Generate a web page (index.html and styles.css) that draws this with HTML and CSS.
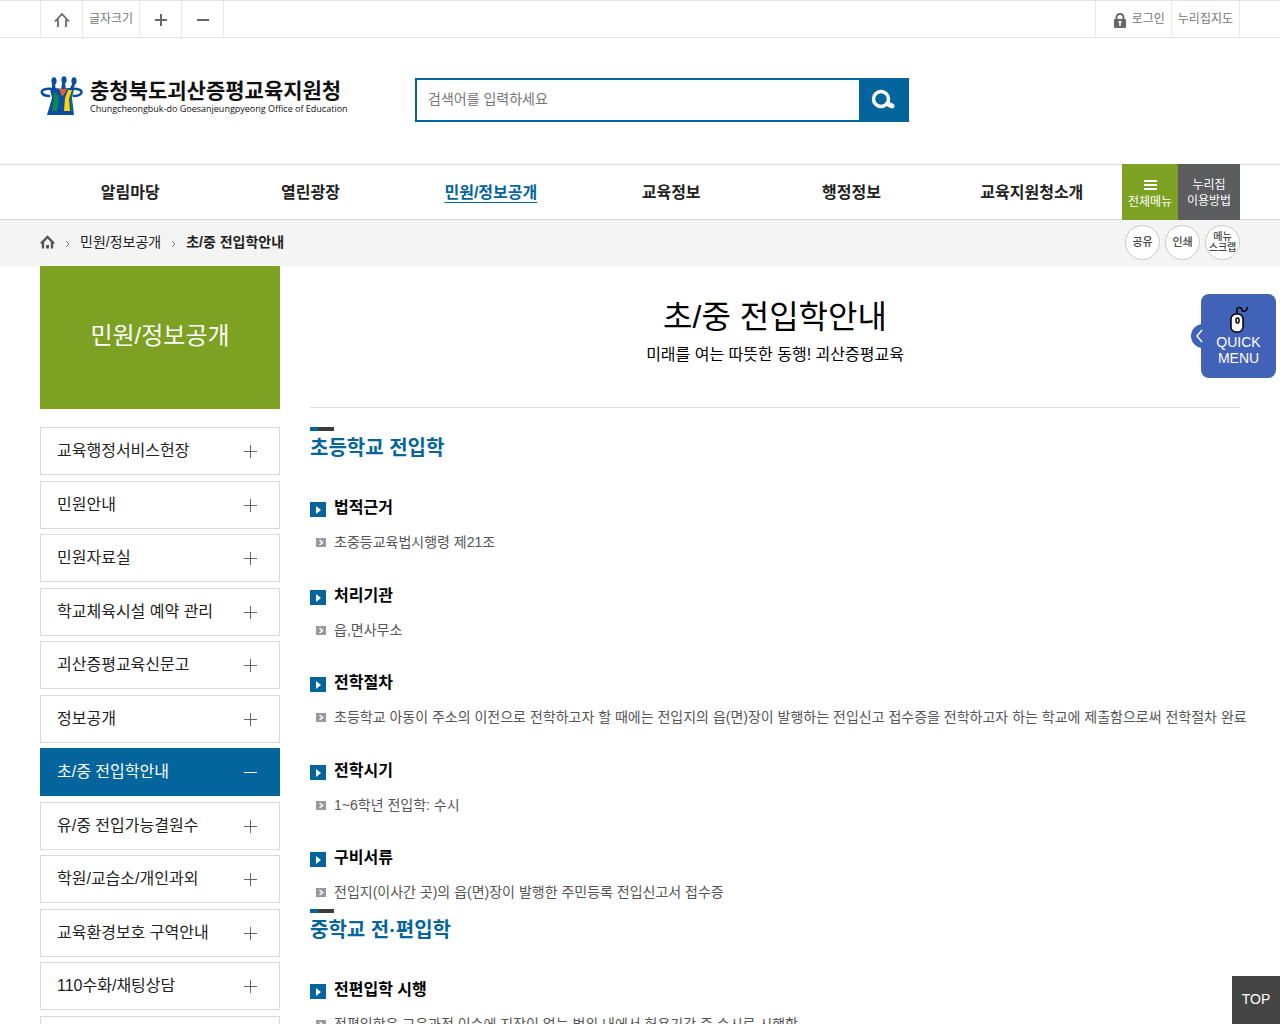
FILE: index.html
```html
<!DOCTYPE html>
<html lang="ko">
<head>
<meta charset="utf-8">
<meta name="viewport" content="width=device-width, initial-scale=1">
<title>초/중 전입학안내 - 충청북도괴산증평교육지원청</title>
<link rel="stylesheet" href="styles.css">
</head>
<body>
<div class="topbar">
  <div class="wrap topbar-row">
    <div class="cells">
      <a class="cell icon-cell" href="#" aria-label="홈"><svg width="16" height="16" viewBox="0 0 16 16"><path d="M1 9.500 8 2l7 7.500M4 7.500V15M12 7.500V15" fill="none" stroke="#666" stroke-width="1.800"/></svg></a>
      <span class="cell">글자크기</span>
      <button class="cell icon-cell" type="button" aria-label="글자 크게"><svg width="14" height="14" viewBox="0 0 14 14"><path d="M1 7h12M7 1v12" stroke="#666" stroke-width="2"/></svg></button>
      <button class="cell icon-cell" type="button" aria-label="글자 작게"><svg width="14" height="14" viewBox="0 0 14 14"><path d="M1 7h12" stroke="#666" stroke-width="2"/></svg></button>
    </div>
    <div class="cells">
      <a class="cell login" href="#"><svg width="12" height="15" viewBox="0 0 12 15"><path d="M2.500 7V4.500a3.500 3.500 0 0 1 7 0V7" fill="none" stroke="#666" stroke-width="2"/><rect y="6" width="12" height="9" rx="1" fill="#666"/><path d="M6 8v5M4.500 9h3" stroke="#fff" stroke-width="1.500"/></svg>로그인</a>
      <a class="cell" href="#">누리집지도</a>
    </div>
  </div>
</div>

<header class="wrap header">
  <a class="logo" href="#">
    <svg width="44" height="40" viewBox="0 0 44 40">
      <path d="M10 20C1 20-1 14 6 13c6-1 10 1 16 1s10-2 15-1c7 1 6 7-4 7" fill="none" stroke="#0c4da2" stroke-width="2.500"/>
      <path d="M10 13q12 2 24 0l-2 9 2 17H7l5-17z" fill="#0c4da2"/>
      <g fill="#0c4da2"><ellipse cx="14" cy="5" rx="2.600" ry="3.800"/><ellipse cx="24" cy="4" rx="2.600" ry="3.800"/><ellipse cx="34" cy="5" rx="2.600" ry="3.800"/><path d="M12 8h3l1 7h-4zM22 7h3l1 7h-5zM32 8h3l-2 7h-4z"/></g>
      <path d="M19 13h8l-3 6-2 1z" fill="#e2622a"/>
      <path d="M13 16l5 3 1 6-2 10h-5l2-12z" fill="#0b8a4b"/>
      <path d="M28 14h4l-3 9 1 12h-6l1-13z" fill="#fdd20a"/>
      <path d="M33 15l-2 8 1 12" fill="none" stroke="#0b8a4b"/>
    </svg>
    <span class="logo-text"><strong>충청북도괴산증평교육지원청</strong><small>Chungcheongbuk-do Goesanjeungpyeong Office of Education</small></span>
  </a>
  <form class="search" role="search">
    <input type="search" aria-label="검색어" placeholder="검색어를 입력하세요">
    <button type="submit" aria-label="검색"><svg width="26" height="22" viewBox="0 0 26 22"><circle cx="11" cy="10" r="7.500" fill="none" stroke="#fff" stroke-width="3.500"/><path d="m18 15 4 2" stroke="#fff" stroke-width="5" stroke-linecap="round"/></svg></button>
  </form>
</header>

<nav class="gnb" aria-label="주메뉴">
  <div class="wrap gnb-row">
    <ul class="gnb-list">
      <li><a href="#">알림마당</a></li>
      <li><a href="#">열린광장</a></li>
      <li><a class="current" href="#">민원/정보공개</a></li>
      <li><a href="#">교육정보</a></li>
      <li><a href="#">행정정보</a></li>
      <li><a href="#">교육지원청소개</a></li>
    </ul>
    <button class="all-menu" type="button"><svg width="13" height="10" viewBox="0 0 13 10"><path d="M0 1h13M0 5h13M0 9h13" stroke="#fff" stroke-width="2"/></svg>전체메뉴</button>
    <a class="guide" href="#">누리집<br>이용방법</a>
  </div>
</nav>

<div class="location">
  <div class="wrap location-row">
    <div class="crumbs">
      <a href="#" aria-label="홈"><svg width="15" height="14" viewBox="0 0 15 14"><path d="M1 8.500 7.500 2 14 8.500M3 7v6.500M12 7v6.500" fill="none" stroke="#555" stroke-width="2.400"/><path d="M6 10h3v3.500H6z" fill="#555"/></svg></a>
      <svg class="sep" width="5" height="8" viewBox="0 0 5 8"><path d="m1 1 3 3-3 3" fill="none" stroke="#777"/></svg>
      <a href="#">민원/정보공개</a>
      <svg class="sep" width="5" height="8" viewBox="0 0 5 8"><path d="m1 1 3 3-3 3" fill="none" stroke="#777"/></svg>
      <strong>초/중 전입학안내</strong>
    </div>
    <div class="tools">
      <button type="button">공유</button>
      <button type="button">인쇄</button>
      <button class="two-line" type="button">메뉴<br>스크랩</button>
    </div>
  </div>
</div>

<div class="wrap body">
  <aside class="side">
    <h2>민원/정보공개</h2>
    <ul class="side-list">
      <li><a href="#">교육행정서비스헌장</a></li>
      <li><a href="#">민원안내</a></li>
      <li><a href="#">민원자료실</a></li>
      <li><a href="#">학교체육시설 예약 관리</a></li>
      <li><a href="#">괴산증평교육신문고</a></li>
      <li><a href="#">정보공개</a></li>
      <li><a class="current" href="#">초/중 전입학안내</a></li>
      <li><a href="#">유/중 전입가능결원수</a></li>
      <li><a href="#">학원/교습소/개인과외</a></li>
      <li><a href="#">교육환경보호 구역안내</a></li>
      <li><a href="#">110수화/채팅상담</a></li>
      <li><a href="#"></a></li>
    </ul>
  </aside>
  <main class="content">
    <div class="page-title">
      <h1>초/중 전입학안내</h1>
      <p>미래를 여는 따뜻한 동행! 괴산증평교육</p>
    </div>
    <section>
      <h3>초등학교 전입학</h3>
      <h4>법적근거</h4>
      <ul><li>초중등교육법시행령 제21조</li></ul>
      <h4>처리기관</h4>
      <ul><li>읍,면사무소</li></ul>
      <h4>전학절차</h4>
      <ul><li>초등학교 아동이 주소의 이전으로 전학하고자 할 때에는 전입지의 읍(면)장이 발행하는 전입신고 접수증을 전학하고자 하는 학교에 제출함으로써 전학절차 완료</li></ul>
      <h4>전학시기</h4>
      <ul><li>1~6학년 전입학: 수시</li></ul>
      <h4>구비서류</h4>
      <ul><li>전입지(이사간 곳)의 읍(면)장이 발행한 주민등록 전입신고서 접수증</li></ul>
    </section>
    <section>
      <h3>중학교 전·편입학</h3>
      <h4>전편입학 시행</h4>
      <ul><li>전편입학은 교육과정 이수에 지장이 없는 범위 내에서 허용기간 중 수시로 시행함</li></ul>
    </section>
  </main>
</div>

<a class="quick" href="#">
  <svg class="quick-arrow" width="12" height="24" viewBox="0 0 12 24"><path d="M12 0a12 12 0 0 0 0 24z" fill="#4262b8"/><path d="m11 6-5 6 5 6" fill="none" stroke="#fff" stroke-width="1.500"/></svg>
  <svg width="20" height="28" viewBox="0 0 20 28"><path d="M8 8V4q0-3 2.500-2.500T13 4t3 1 2-4" fill="none" stroke="#000" stroke-width="1.500"/><rect x="2" y="8" width="12" height="18" rx="5" fill="#fff" stroke="#000" stroke-width="1.500"/><rect x="7" y="12" width="3" height="5" rx="1.500" fill="#fff" stroke="#000" stroke-width="1.500"/></svg>
  <span>QUICK<br>MENU</span>
</a>
<a class="top-link" href="#">TOP</a>
</body>
</html>
```
FILE: styles.css
```css
* { box-sizing: border-box; }
body {
  margin: 0;
  font: 16px/24px "Liberation Sans", "Noto Sans CJK KR", sans-serif;
  color: #222;
  background: #fff;
}
h1, h2, h3, h4, p, ul { margin: 0; padding: 0; }
ul { list-style: none; }
a { color: inherit; text-decoration: none; }
button { font: inherit; color: inherit; border: 0; padding: 0; background: none; cursor: pointer; }
svg { display: block; flex: none; }
.wrap { max-width: 1200px; margin: 0 auto; }

.topbar { border: solid #e3e3e3; border-width: 1px 0; }
.topbar-row, .cells { display: flex; justify-content: space-between; }
.cells { border-left: 1px solid #e8e8e8; }
.cell {
  display: flex;
  align-items: center;
  gap: 6px;
  height: 36px;
  padding: 0 6px;
  border-right: 1px solid #e8e8e8;
  font-size: 12px;
  color: #777;
}
.icon-cell { width: 42px; justify-content: center; padding: 2px 0 0; }
.login { padding-left: 18px; }
.login svg { margin-top: 2px; }

.header { display: flex; align-items: flex-start; padding: 40px 0 42px; }
.logo { display: flex; gap: 6px; width: 375px; }
.logo > svg { margin-top: -2px; }
.logo-text { display: flex; flex-direction: column; white-space: nowrap; color: #111; }
.logo-text strong { font-size: 21px; line-height: 26px; }
.logo-text small { font: 9px/10px "Open Sans", sans-serif; }
.search { display: flex; width: 494px; height: 44px; border: 2px solid #04659d; }
.search input {
  flex: 1;
  min-width: 0;
  border: 0;
  padding: 0 11px 2px;
  font: inherit;
  font-size: 14px;
  outline: 0;
}
.search input::placeholder { color: #757575; }
.search button { display: grid; place-items: center; width: 48px; background: #04659d; }

.gnb { border: solid #dcdcdc; border-width: 1px 0; }
.gnb-row { display: flex; height: 54px; }
.gnb-list { display: flex; flex: 1; }
.gnb-list li { flex: 1; text-align: center; font-weight: 700; line-height: 56px; white-space: nowrap; }
.gnb-list .current { color: #04659d; text-decoration: underline; text-underline-offset: 4px; }
.all-menu, .guide {
  display: flex;
  flex-direction: column;
  align-items: center;
  justify-content: center;
  margin: -1px 0;
  width: 56px;
  background: #7da123;
  color: #fff;
  font-size: 12px;
  line-height: 16px;
  text-align: center;
}
.all-menu { gap: 4px; padding-top: 6px; }
.guide { display: grid; place-content: center; width: 62px; padding-top: 2px; background: #5b5d5e; }

.location { background: #f4f4f4; }
.location-row { display: flex; justify-content: space-between; align-items: center; height: 46px; padding-bottom: 2px; }
.crumbs { display: flex; align-items: center; gap: 10px; font-size: 14px; }
.crumbs .sep { margin-top: 4px; }
.tools { display: flex; gap: 5px; }
.tools button {
  width: 35px;
  height: 35px;
  border: 1px solid #c8c8c8;
  border-radius: 50%;
  background: #fff;
  font-size: 11px;
  font-weight: 500;
  line-height: 11px;
  color: #444;
  white-space: nowrap;
}
.tools .two-line { font-size: 10px; }

.body { display: flex; gap: 30px; }
.side { flex: none; width: 240px; }
.side h2 {
  padding: 56px 0 60px;
  margin-bottom: 18px;
  background: #7da123;
  color: #fff;
  font-size: 24px;
  font-weight: 400;
  line-height: 27px;
  text-align: center;
}
.side-list li { margin-bottom: 5px; }
.side-list li:nth-child(odd) { margin-bottom: 6px; }
.side-list a {
  display: flex;
  align-items: center;
  justify-content: space-between;
  height: 48px;
  padding: 0 22px 0 16px;
  border: 1px solid #d9d9d9;
}
.side-list a::after {
  content: "";
  width: 13px;
  height: 13px;
  margin-top: 1px;
  background:
    linear-gradient(#666, #666) center / 13px 1px no-repeat,
    linear-gradient(#666, #666) center / 1px 13px no-repeat;
}
.side-list .current { background: #04659d; border-color: #04659d; color: #fff; }
.side-list .current::after { background: linear-gradient(#fff, #fff) center / 13px 1px no-repeat; }

.content { flex: 1; min-width: 0; }
.page-title {
  padding: 29px 0 39px;
  margin-bottom: 19px;
  border-bottom: 1px solid #ddd;
  color: #000;
  text-align: center;
}
.page-title h1 { font-size: 32px; font-weight: 400; line-height: 44px; }
.page-title p { padding-top: 2px; line-height: 27px; }
.content section + section { margin-top: 6px; }
.content h3 {
  padding-top: 7px;
  margin-bottom: 34px;
  background: linear-gradient(90deg, #04659d 8px, #3d3d3d 8px) 0 0 / 24px 4px no-repeat;
  color: #04659d;
  font-size: 20px;
  line-height: 28px;
}
.content h4 {
  display: flex;
  align-items: center;
  gap: 8px;
  margin-bottom: 11px;
  color: #000;
  font-size: 16px;
  line-height: 24px;
}
.content h4::before {
  content: "";
  width: 16px;
  height: 15px;
  margin-top: 3px;
  background: #04659d url("data:image/svg+xml,%3Csvg xmlns='http://www.w3.org/2000/svg' width='16' height='15'%3E%3Cpath d='M6 4v8l5-4z' fill='%23fff'/%3E%3C/svg%3E");
}
.content li {
  display: flex;
  gap: 8px;
  padding-left: 6px;
  color: #555;
  font-size: 14px;
  line-height: 22px;
}
.content li::before {
  content: "";
  flex: none;
  width: 10px;
  height: 9px;
  margin-top: 7px;
  background: #999 url("data:image/svg+xml,%3Csvg xmlns='http://www.w3.org/2000/svg' width='10' height='9'%3E%3Cpath d='m3.500 2 3 2.500-3 2.500' fill='none' stroke='%23fff' stroke-width='1.500'/%3E%3C/svg%3E");
}
.content ul + h4 { margin-top: 31px; }
.content ul + h4:nth-of-type(odd) { margin-top: 30px; }
@media (min-width: 1240px) {
  .content li { white-space: nowrap; }
}

.quick {
  position: fixed;
  top: 294px;
  right: 4px;
  display: flex;
  flex-direction: column;
  align-items: center;
  width: 75px;
  height: 84px;
  padding-top: 12px;
  border-radius: 8px;
  background: #4262b8;
  color: #fff;
  font-size: 14px;
  line-height: 16px;
  text-align: center;
}
.quick-arrow { position: absolute; left: -10px; top: 30px; }
.top-link {
  position: fixed;
  right: 0;
  bottom: 0;
  width: 48px;
  background: #444;
  color: #fff;
  font-size: 14px;
  line-height: 46px;
  padding-bottom: 2px;
  text-align: center;
}
```
